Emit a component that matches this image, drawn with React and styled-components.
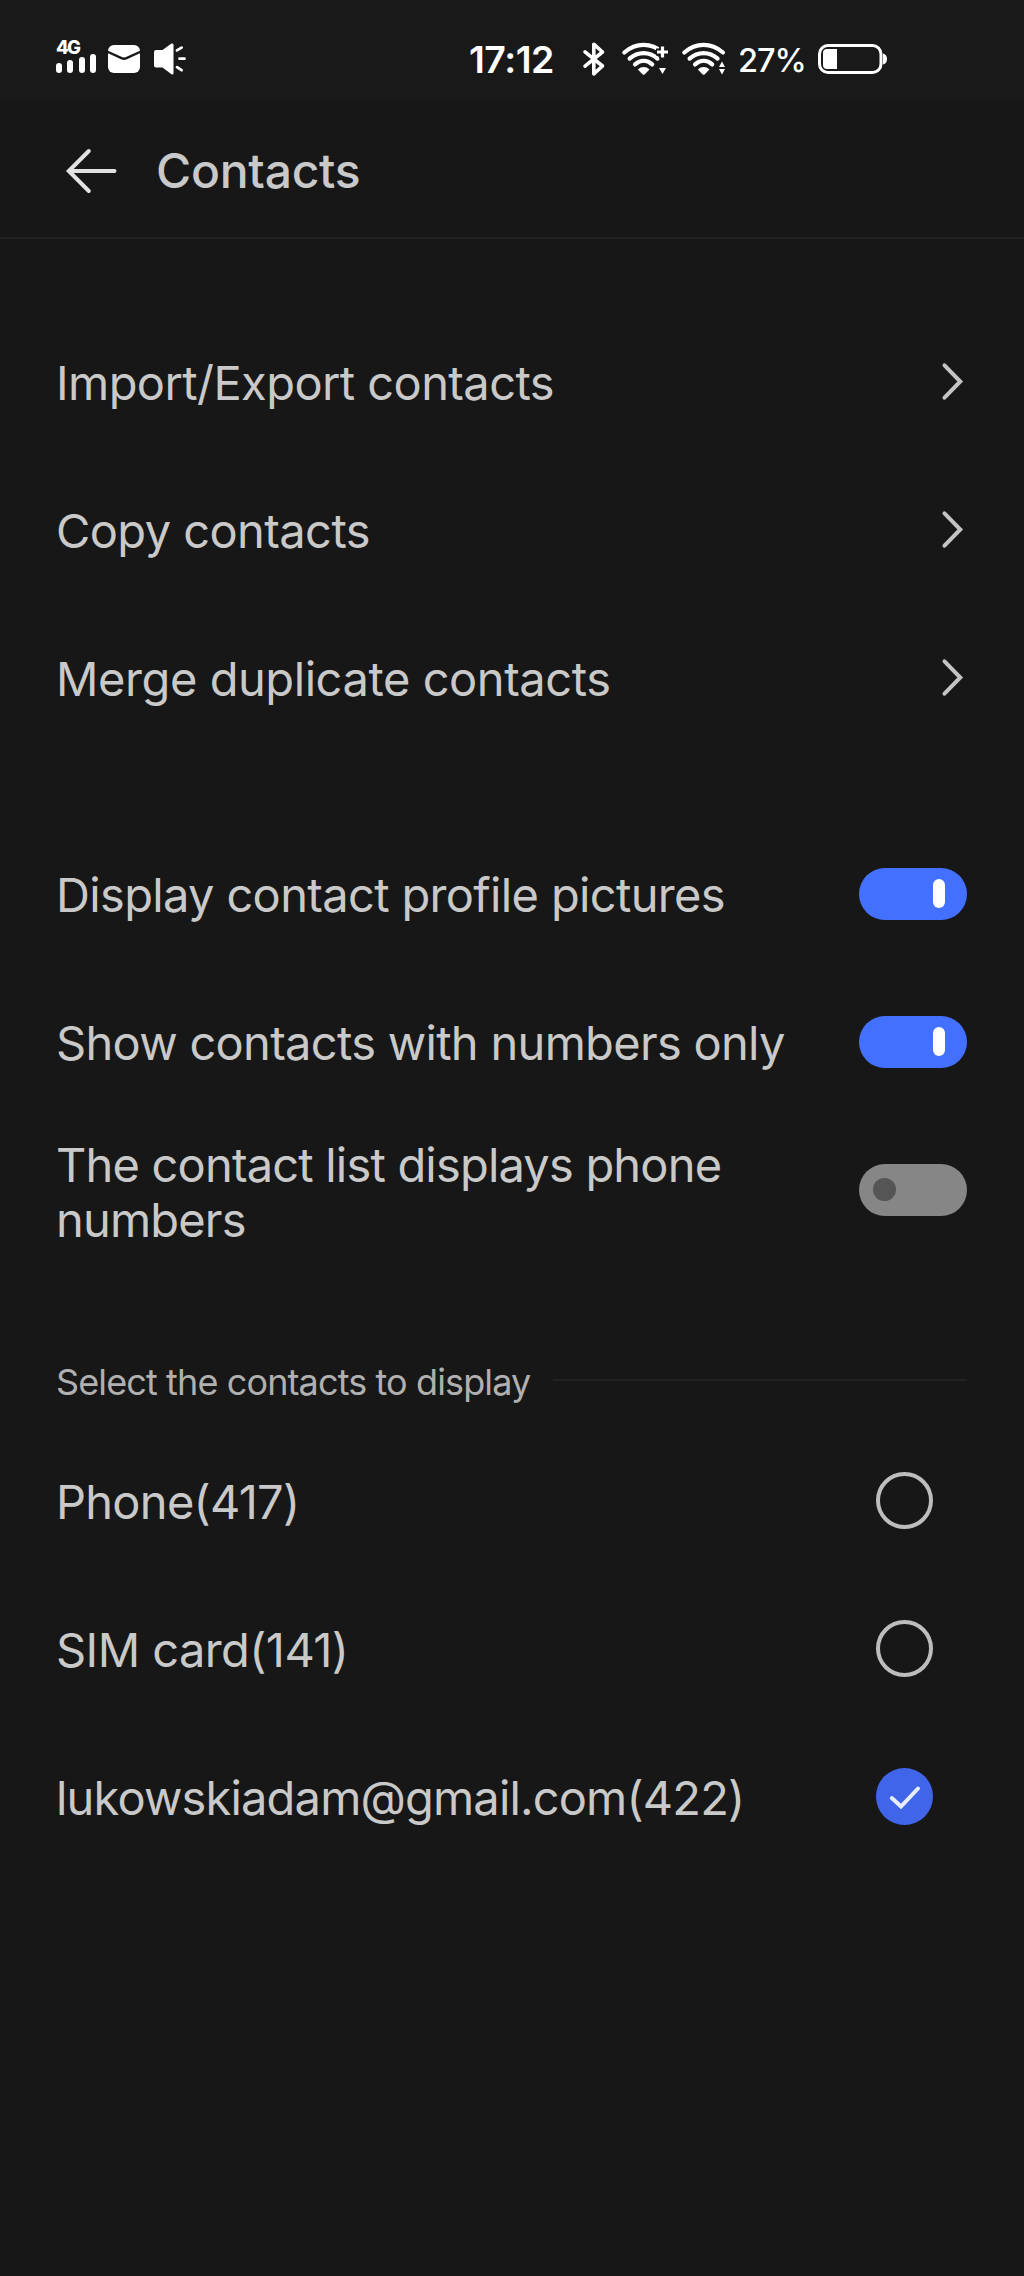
import React, { useState } from "react";
import styled, { createGlobalStyle } from "styled-components";

const GlobalStyle = createGlobalStyle`
  * { box-sizing: border-box; }
  body {
    margin: 0;
    background: #171717;
    font-family: Inter, "Liberation Sans", sans-serif;
  }
`;

const Screen = styled.div`
  width: 1024px;
  height: 2276px;
  background: #171717;
  color: #c9c9c9;
  display: flex;
  flex-direction: column;
  overflow: hidden;
`;

const StatusBar = styled.div`
  height: 102px;
  flex: none;
  display: flex;
  align-items: flex-start;
  justify-content: space-between;
  padding: 36px 137px 0 56px;
  color: #fff;
  background: #191919;
`;

const StatusGroup = styled.div`
  display: flex;
  height: 46px;
  align-items: center;
`;

const Signal = styled.div`
  width: 42px;
  height: 33px;
  display: flex;
  flex-direction: column;
  justify-content: space-between;
  align-self: flex-start;
  margin: 4px 10px 0 0;
`;

const NetworkType = styled.span`
  font-size: 18.5px;
  line-height: 14px;
  font-weight: 800;
  letter-spacing: -1.8px;
`;

const Bars = styled.div`
  display: flex;
  align-items: flex-end;
  gap: 5.4px;
`;

const Bar = styled.i`
  width: 6px;
  height: ${(p) => p.$h}px;
  border-radius: 3px;
  background: #fff;
`;

const Clock = styled.span`
  font-size: 37.5px;
  line-height: 46px;
  font-weight: 600;
  letter-spacing: -0.5px;
  width: 114px;
  padding-top: 2px;
`;

const Percent = styled.span`
  font-size: 32.5px;
  line-height: 46px;
  font-weight: 500;
  letter-spacing: -1.1px;
  width: 80px;
  margin-left: -2px;
  padding-top: 3px;
`;

const Icon = styled.svg`
  display: block;
  flex: none;
  overflow: visible;
  margin-right: ${(p) => p.$gap || 0}px;
`;

const AppBar = styled.header`
  height: 137px;
  flex: none;
  display: flex;
  align-items: center;
  padding: 2px 66px 0;
  border-bottom: 2px solid #212121;
`;

const BackButton = styled.button`
  border: 0;
  padding: 0;
  background: none;
  color: #e2e2e2;
  width: 90px;
`;

const Title = styled.h1`
  margin: 0;
  font-size: 48px;
  line-height: 60px;
  font-weight: 500;
  letter-spacing: -0.25px;
`;

const Group = styled.section`
  display: flex;
  flex-direction: column;
  padding: 0 57px 0 56px;
  margin-top: ${(p) => p.$top}px;
`;

const Row = styled.div`
  min-height: 148px;
  display: flex;
  align-items: center;
  justify-content: space-between;
`;

const Label = styled.span`
  width: 740px;
  padding-top: ${(p) => (p.$wrapped ? 6 : 3)}px;
  font-size: 47px;
  line-height: 54.4px;
  letter-spacing: ${(p) => p.$ls || 0}px;
`;

const ChevronSlot = styled.span`
  padding-right: 4px;
`;

const Track = styled.button`
  width: 108px;
  height: 52px;
  flex: none;
  border: 0;
  border-radius: 26px;
  display: flex;
  align-items: center;
  justify-content: ${(p) => (p.$on ? "flex-end" : "flex-start")};
  padding: ${(p) => (p.$on ? "0 22px" : "0 14px")};
  background: ${(p) => (p.$on ? "#4470ff" : "#868686")};
`;

const Knob = styled.span`
  width: ${(p) => (p.$on ? 12 : 23)}px;
  height: ${(p) => (p.$on ? 29 : 23)}px;
  border-radius: 12px;
  background: ${(p) => (p.$on ? "#fff" : "#555")};
`;

const SectionHeader = styled.div`
  height: 162px;
  flex: none;
  display: flex;
  align-items: center;
  padding: 71px 57px 0 56px;
  gap: 22px;
`;

const SectionTitle = styled.h2`
  margin: 0;
  flex: none;
  width: 475px;
  white-space: nowrap;
  padding-top: 4px;
  font-size: 36px;
  line-height: 44px;
  font-weight: 400;
  letter-spacing: -0.88px;
  color: #b0b0b0;
`;

const Rule = styled.span`
  flex: 1;
  height: 2px;
  background: #212121;
`;

const Radio = styled.button`
  width: 57px;
  height: 57px;
  margin-right: 34px;
  flex: none;
  padding: 0;
  display: flex;
  align-items: center;
  justify-content: center;
  border-radius: 50%;
  border: ${(p) => (p.$on ? "0" : "4px solid #bdbdbd")};
  background: ${(p) => (p.$on ? "#4065e8" : "transparent")};
`;

const Chevron = () => (
  <ChevronSlot>
    <Icon width="21" height="37" viewBox="0 0 21 37" fill="none" stroke="#c4c4c4" strokeWidth="4" strokeLinecap="round">
      <path d="M2.5 2.3 18.3 18.5 2.5 34.7" />
    </Icon>
  </ChevronSlot>
);

const Toggle = ({ defaultOn, label }) => {
  const [on, setOn] = useState(defaultOn);
  return (
    <Track $on={on} role="switch" aria-checked={on} aria-label={label} onClick={() => setOn(!on)}>
      <Knob $on={on} />
    </Track>
  );
};

const WifiArcs = () => (
  <>
    <g fill="none" stroke="#fff" strokeWidth="4.2" strokeLinecap="round">
      <path d="M2.3 9.5C14 -.6 29 -.6 41 9.5" />
      <path d="M7.6 15.6C16 8.2 27.3 8.2 35.6 15.6" />
      <path d="M13 21.4C18.4 16.8 25 16.8 30.2 21.4" />
    </g>
    <path d="M15.8 26.5C19.4 23.2 24 23.2 27.5 26.5L22.8 31.2Q21.6 32.2 20.5 31.2Z" fill="#fff" />
  </>
);

const links = [
  { text: "Import/Export contacts", ls: -0.58 },
  { text: "Copy contacts", ls: -0.57 },
  { text: "Merge duplicate contacts", ls: -0.43 },
];

const toggles = [
  { text: "Display contact profile pictures", on: true, ls: -0.65 },
  { text: "Show contacts with numbers only", on: true, ls: -0.7 },
  { text: "The contact list displays phone numbers", on: false, ls: -0.81, wrapped: true },
];

const accounts = [
  { text: "Phone(417)", ls: -0.72 },
  { text: "SIM card(141)", ls: -0.57 },
  { text: "lukowskiadam@gmail.com(422)", ls: -0.83 },
];

export default function App() {
  const [selected, setSelected] = useState(2);
  return (
    <>
      <GlobalStyle />
      <Screen>
        <StatusBar>
          <StatusGroup>
            <Signal>
              <NetworkType>4G</NetworkType>
              <Bars>
                {[10, 13, 16, 19].map((h) => (
                  <Bar key={h} $h={h} />
                ))}
              </Bars>
            </Signal>
            <Icon width="32" height="28" viewBox="0 0 32 28" $gap={14}>
              <rect width="32" height="28" rx="6" fill="#fff" />
              <path d="M-1 6.5 13.5 13.2Q16 14.2 18.5 13.2L33 6.5" fill="none" stroke="#191919" strokeWidth="2.4" />
            </Icon>
            <Icon width="32" height="32" viewBox="0 0 32 32" fill="#fff">
              <path d="M2 7H8.5L17.5.6Q19.5-.2 19.5 2V30Q19.5 32.2 17.5 31.2L8.5 24.5H2Q0 24.5 0 22.5V9Q0 7 2 7Z" />
              <path d="M23 7.4 27.6 4.6M25.5 15.7H30.5M23 24.2 27.6 27.2" stroke="#fff" strokeWidth="2.8" strokeLinecap="round" />
            </Icon>
          </StatusGroup>
          <StatusGroup>
            <Clock>17:12</Clock>
            <Icon width="22" height="34" viewBox="0 0 22 34" $gap={17} fill="none" stroke="#fff" strokeWidth="3.6" strokeLinejoin="round" strokeLinecap="round">
              <path d="M2 9.8 19.5 24 10.8 31.8V2.2L19.5 10 2 24.2" />
            </Icon>
            <Icon width="46" height="33" viewBox="0 0 46 33" $gap={14}>
              <WifiArcs />
              <path d="M40.5 2.5V15.5M34 9H47" stroke="#191919" strokeWidth="7" />
              <path d="M40.5 3.5V14.5M35 9H46" stroke="#fff" strokeWidth="3.2" />
              <path d="M37 25H44L40.5 31Z" fill="#fff" />
            </Icon>
            <Icon width="44" height="33" viewBox="0 0 44 33" $gap={14}>
              <WifiArcs />
              <path d="M37 24 40 18.5 43 24ZM37 26H43L40 31.5Z" fill="#fff" />
            </Icon>
            <Percent>27%</Percent>
            <Icon width="69" height="30" viewBox="0 0 69 30">
              <rect x="1.5" y="1.5" width="61.5" height="27" rx="8.5" fill="none" stroke="#fff" strokeWidth="3" />
              <path d="M9 5H19V25H9Q5 25 5 21V9Q5 5 9 5Z" fill="#fff" />
              <path d="M65 9.5Q69 10.5 69 15T65 20.5Z" fill="#fff" />
            </Icon>
          </StatusGroup>
        </StatusBar>

        <AppBar>
          <BackButton aria-label="Back">
            <Icon width="51" height="44" viewBox="0 0 51 44" fill="none" stroke="currentColor" strokeWidth="4" strokeLinecap="round">
              <path d="M22.8 2 2.8 22 22.8 42M3.5 22H48.5" />
            </Icon>
          </BackButton>
          <Title>Contacts</Title>
        </AppBar>

        <Group $top={68.5}>
          {links.map((l) => (
            <Row key={l.text}>
              <Label $ls={l.ls}>{l.text}</Label>
              <Chevron />
            </Row>
          ))}
        </Group>

        <Group $top={68}>
          {toggles.map((t) => (
            <Row key={t.text}>
              <Label $ls={t.ls} $wrapped={t.wrapped}>{t.text}</Label>
              <Toggle defaultOn={t.on} label={t.text} />
            </Row>
          ))}
        </Group>

        <SectionHeader>
          <SectionTitle>Select the contacts to display</SectionTitle>
          <Rule />
        </SectionHeader>

        <Group $top={1}>
          {accounts.map((a, i) => (
            <Row key={a.text}>
              <Label $ls={a.ls}>{a.text}</Label>
              <Radio $on={selected === i} role="radio" aria-checked={selected === i} aria-label={a.text} onClick={() => setSelected(i)}>
                {selected === i && (
                  <Icon width="32" height="24" viewBox="0 0 32 24" fill="none" stroke="#e8edff" strokeWidth="4" strokeLinecap="round">
                    <path d="M2.8 13 12 21.5 29 3.5" />
                  </Icon>
                )}
              </Radio>
            </Row>
          ))}
        </Group>
      </Screen>
    </>
  );
}
